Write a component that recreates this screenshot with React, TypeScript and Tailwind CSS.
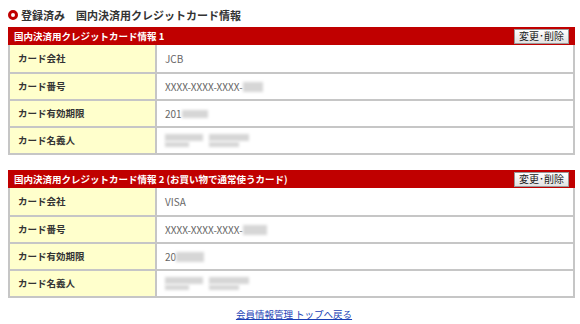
import React from 'react';

type Row = { label: string; value: React.ReactNode };

const Blur = ({ w, h = 10 }: { w: number; h?: number }) => (
    <span className="inline-block bg-[#d6d6d6] align-middle blur-[1.5px]" style={{ width: w, height: h }} />
);

const NameBlur = () => (
    <span className="inline-flex items-center gap-[6px]">
        <span className="inline-flex flex-col gap-[1px]">
            <Blur w={38} h={7} />
            <Blur w={24} h={5} />
        </span>
        <span className="inline-flex flex-col gap-[1px]">
            <Blur w={40} h={7} />
            <Blur w={30} h={5} />
        </span>
    </span>
);

const CardTable = ({ title, rows }: { title: string; rows: Row[] }) => (
    <div className="w-[567px]">
        <div className="flex h-[18px] items-center justify-between bg-[#c00000] pl-[6px] pr-[6px]">
            <span className="text-[9.5px] font-bold text-white">{title}</span>
            <button className="h-[15px] border border-[#999] bg-gradient-to-b from-[#ffffff] to-[#e2e2e2] px-[4px] text-[10px] leading-[12px] text-[#222]">
                変更･削除
            </button>
        </div>
        <div className="border-x-2 border-b-2 border-[#c6c6c6]">
            {rows.map((row, i) => (
                <div key={i} className={`flex h-[27px] ${i > 0 ? 'border-t-2 border-[#c6c6c6]' : ''}`}>
                    <div className="flex w-[147px] items-center border-r-2 border-[#c6c6c6] bg-[#ffffcc] pl-[8px] text-[9.5px] font-bold text-[#333]">
                        {row.label}
                    </div>
                    <div className="flex flex-1 items-center pl-[8px] text-[10px] text-[#666]">{row.value}</div>
                </div>
            ))}
        </div>
    </div>
);

export default function App() {
    const card1: Row[] = [
        { label: 'カード会社', value: 'JCB' },
        {
            label: 'カード番号',
            value: (
                <span className="flex items-center">
                    XXXX-XXXX-XXXX-
                    <Blur w={20} />
                </span>
            ),
        },
        {
            label: 'カード有効期限',
            value: (
                <span className="flex items-center">
                    201
                    <Blur w={26} h={8} />
                </span>
            ),
        },
        { label: 'カード名義人', value: <NameBlur /> },
    ];
    const card2: Row[] = [
        { label: 'カード会社', value: 'VISA' },
        {
            label: 'カード番号',
            value: (
                <span className="flex items-center">
                    XXXX-XXXX-XXXX-
                    <Blur w={24} />
                </span>
            ),
        },
        {
            label: 'カード有効期限',
            value: (
                <span className="flex items-center">
                    20
                    <Blur w={28} />
                </span>
            ),
        },
        { label: 'カード名義人', value: <NameBlur /> },
    ];

    return (
        <div
            className="h-[324px] w-[580px] bg-white pl-[8px]"
            style={{ fontFamily: '"Noto Sans CJK JP", "Liberation Sans", sans-serif' }}
        >
            <div className="flex h-[27px] items-center gap-[3px] pt-[3px] text-[11px] font-bold text-[#333]">
                <span className="inline-block h-[10px] w-[10px] rounded-full border-[3px] border-[#c00000] bg-white" />
                <span>登録済み　国内決済用クレジットカード情報</span>
            </div>
            <CardTable title="国内決済用クレジットカード情報 1" rows={card1} />
            <div className="h-[15px]" />
            <CardTable title="国内決済用クレジットカード情報 2 (お買い物で通常使うカード)" rows={card2} />
            <div className="flex justify-center pt-[9px]">
                <a href="#" className="text-[9.5px] text-[#1a3fb5] underline">
                    会員情報管理 トップへ戻る
                </a>
            </div>
        </div>
    );
}
